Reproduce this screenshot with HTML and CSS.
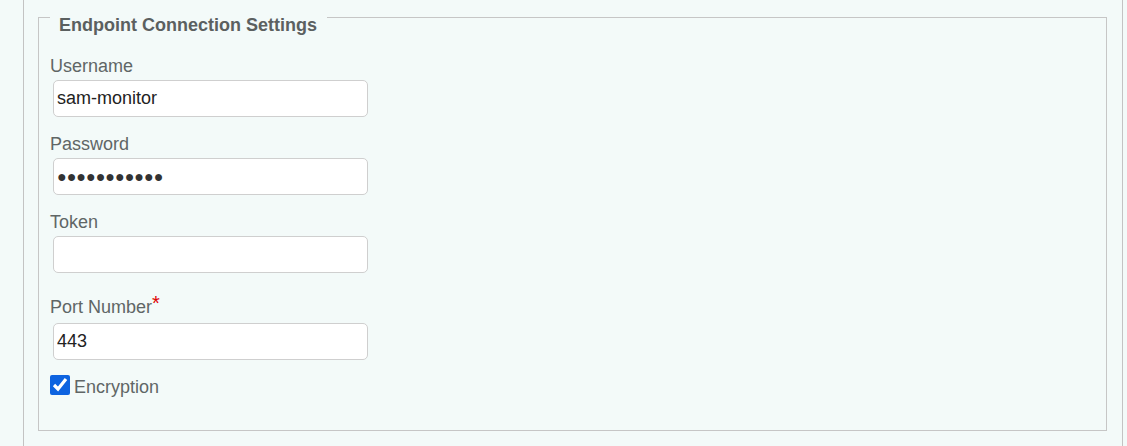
FILE: index.html
```html
<!DOCTYPE html>
<html lang="en">
<head>
<meta charset="utf-8">
<title>Endpoint Connection Settings</title>
<link rel="stylesheet" href="styles.css">
</head>
<body>
<div class="panel">
  <fieldset class="settings">
    <legend class="settings-title">Endpoint Connection Settings</legend>
    <div class="field">
      <label class="field-label" for="username">Username</label>
      <input class="field-input" id="username" type="text" value="sam-monitor">
    </div>
    <div class="field">
      <label class="field-label" for="password">Password</label>
      <input class="field-input field-input--secret" id="password" type="text" value="●●●●●●●●●●●" readonly>
    </div>
    <div class="field">
      <label class="field-label" for="token">Token</label>
      <input class="field-input" id="token" type="text" value="">
    </div>
    <div class="field">
      <label class="field-label field-label--required" for="port">Port Number<span class="required">*</span></label>
      <input class="field-input" id="port" type="text" value="443">
    </div>
    <div class="check-row">
      <input class="check" id="encryption" type="checkbox" checked>
      <label class="check-label" for="encryption">Encryption</label>
    </div>
  </fieldset>
</div>
</body>
</html>
```
FILE: styles.css
```css
html, body {
  margin: 0;
  padding: 0;
  background: #f3faf9;
  height: 100%;
}
body {
  font-family: "Liberation Sans", Arial, sans-serif;
  overflow: hidden;
}
.panel {
  margin: 0 4px 0 23px;
  border-left: 1px solid #c3c3c3;
  border-right: 1px solid #c3c3c3;
  padding: 0 15px 30px 14px;
  min-height: 100%;
  box-sizing: border-box;
}
.settings {
  margin: -1px 0 0 0;
  border: 1px solid #c6c6c6;
  padding: 21px 11px 32px 11px;
  min-width: 0;
}
.settings-title {
  font-size: 18px;
  font-weight: bold;
  line-height: 20px;
  color: #5b6060;
  padding: 16px 10px 0 9px;
}
.field {
  margin-bottom: 17px;
}
.field-label {
  display: block;
  font-size: 18px;
  line-height: 21px;
  color: #606666;
  margin-bottom: 3px;
}
.field-label--required {
  padding-top: 7px;
  margin-bottom: 5px;
}
.required {
  color: #e00000;
  font-size: 20px;
  line-height: 0;
  vertical-align: 3px;
}
.field-input {
  display: block;
  box-sizing: border-box;
  width: 315px;
  height: 37px;
  margin: 0 0 0 3px;
  padding: 0 3px;
  border: 1px solid #cfcfcf;
  border-radius: 5px;
  background: #fff;
  font-family: "Liberation Sans", Arial, sans-serif;
  font-size: 18px;
  color: #222;
}
.field-input--secret {
  font-size: 16px;
  color: #333;
}
.check-row {
  display: flex;
  align-items: flex-start;
  gap: 4px;
  margin-top: -2px;
}
.check {
  width: 20px;
  height: 20px;
  margin: 0;
  accent-color: #0d63e0;
}
.check-label {
  font-size: 18px;
  line-height: 21px;
  color: #606666;
  margin-top: 2px;
}
```
